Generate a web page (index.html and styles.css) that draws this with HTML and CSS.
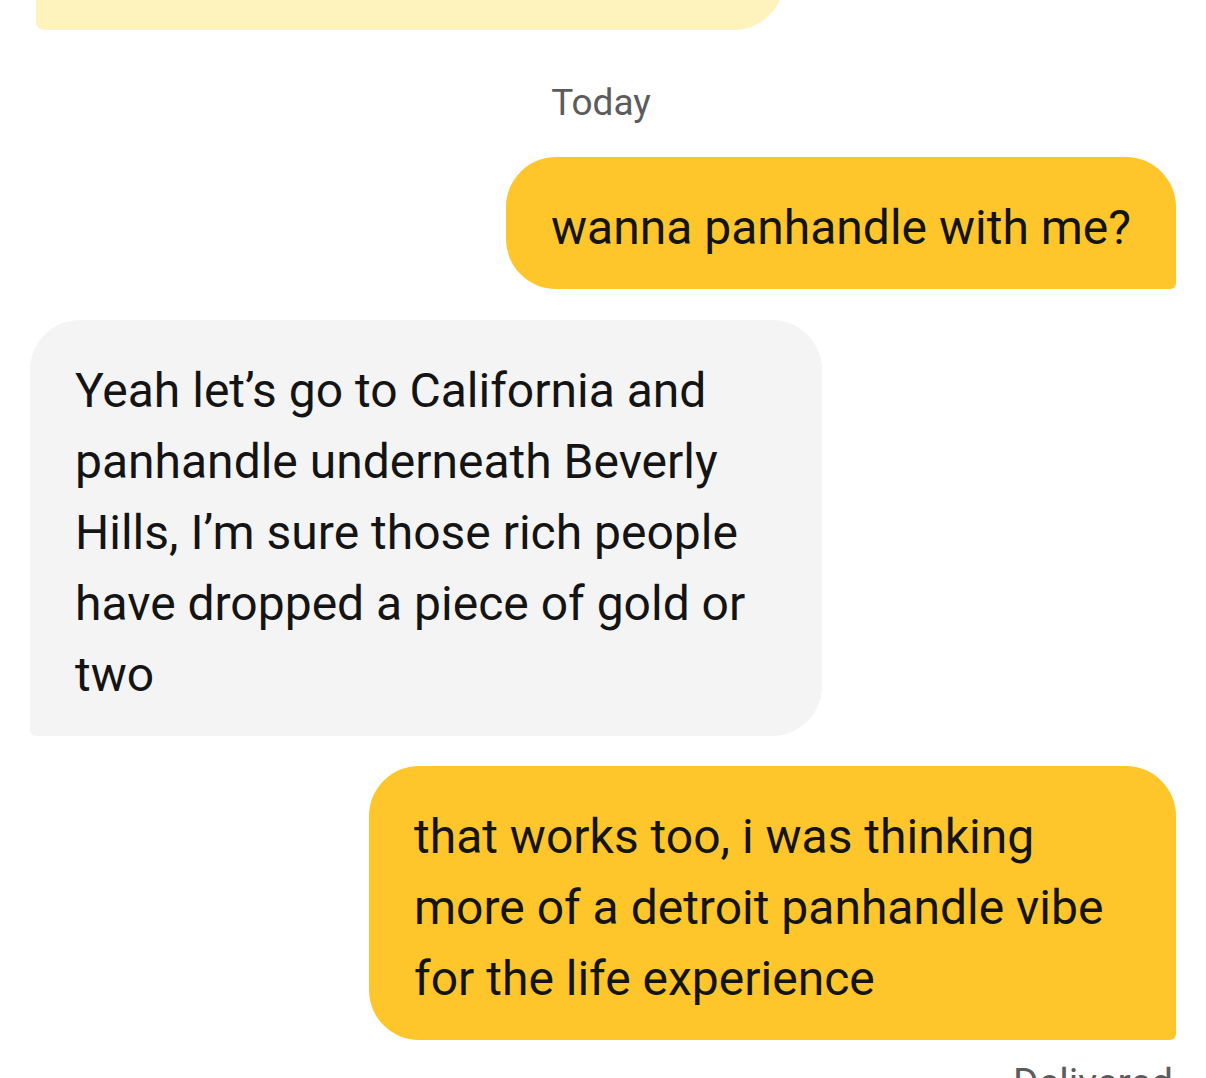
FILE: index.html
```html
<!DOCTYPE html>
<html lang="en">
<head>
<meta charset="utf-8">
<title>Chat</title>
<link rel="stylesheet" href="styles.css">
</head>
<body>
<main class="chat">
  <div class="bubble bubble--prompt"></div>
  <div class="day">Today</div>
  <div class="bubble bubble--out">wanna panhandle with me?</div>
  <div class="bubble bubble--in">Yeah let’s go to California and panhandle underneath Beverly Hills, I’m sure those rich people have dropped a piece of gold or two</div>
  <div class="bubble bubble--out bubble--long">that works too, i was thinking more of a detroit panhandle vibe for the life experience</div>
  <div class="status">Delivered</div>
</main>
</body>
</html>
```

FILE: styles.css
```css
html, body {
  margin: 0;
  padding: 0;
  background: #ffffff;
}

body {
  font-family: Roboto, "Noto Sans", "Liberation Sans", sans-serif;
  color: #141414;
  overflow: hidden;
  height: 1078px;
}

.chat {
  display: flex;
  flex-direction: column;
  padding: 0 30px;
}

.bubble {
  box-sizing: border-box;
  font-size: 48px;
  line-height: 71px;
  padding: 35px 45px 26px 45px;
  width: fit-content;
}

.bubble--prompt {
  align-self: flex-start;
  margin-top: -70px;
  margin-left: 6px;
  width: 748px;
  height: 100px;
  padding: 0;
  background: #fff3bd;
  border-radius: 50px 50px 50px 8px;
}

.day {
  align-self: center;
  margin-top: 51px;
  margin-right: 4px;
  font-size: 37px;
  line-height: 43px;
  color: #5c5c5c;
}

.bubble--out {
  align-self: flex-end;
  background: #fec62a;
  border-radius: 50px 50px 6px 50px;
  max-width: 807px;
  margin-top: 33px;
}

.bubble--in {
  align-self: flex-start;
  background: #f4f4f4;
  border-radius: 50px 50px 50px 6px;
  max-width: 792px;
  margin-top: 31px;
}

.bubble--long {
  margin-top: 30px;
}

.status {
  align-self: flex-end;
  margin-top: 22px;
  margin-right: 3px;
  font-size: 39px;
  line-height: 43px;
  color: #5c5c5c;
}
```
